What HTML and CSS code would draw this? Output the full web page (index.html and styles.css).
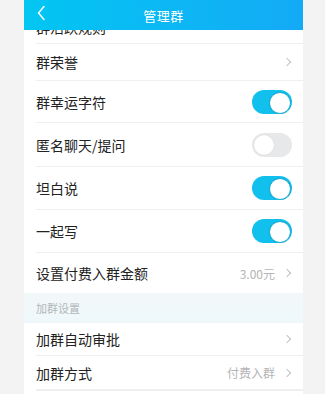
FILE: index.html
```html
<!DOCTYPE html>
<html lang="zh-CN">
<head>
<meta charset="utf-8">
<title>管理群</title>
<link rel="stylesheet" href="styles.css">
</head>
<body>
<div class="page">
  <header class="topbar">
    <svg class="back" width="10" height="16" viewBox="0 0 10 16"><path d="M8 1.5 L2.5 8 L8 14.5" fill="none" stroke="#ffffff" stroke-width="1.4" stroke-linecap="round" stroke-linejoin="round"/></svg>
    <span class="title">管理群</span>
  </header>
  <div class="list">
    <div class="row row-cut"><span class="label">群活跃规则</span></div>
    <div class="row h37"><span class="label">群荣誉</span><span class="right"><span class="chev"></span></span></div>
    <div class="row h42"><span class="label">群幸运字符</span><span class="switch on"></span></div>
    <div class="row h44"><span class="label">匿名聊天/提问</span><span class="switch"></span></div>
    <div class="row h43"><span class="label">坦白说</span><span class="switch on"></span></div>
    <div class="row h43"><span class="label">一起写</span><span class="switch on"></span></div>
    <div class="row h40 last"><span class="label">设置付费入群金额</span><span class="right"><span class="value">3.00元</span><span class="chev"></span></span></div>
    <div class="section">加群设置</div>
    <div class="group2">
      <div class="row h33"><span class="label">加群自动审批</span><span class="right"><span class="chev"></span></span></div>
      <div class="row h34"><span class="label">加群方式</span><span class="right"><span class="value">付费入群</span><span class="chev"></span></span></div>
      <div class="row h33 last"></div>
    </div>
  </div>
</div>
</body>
</html>
```

FILE: styles.css
```css
* { box-sizing: border-box; }
html, body {
  margin: 0;
  padding: 0;
  background: #f3f3f3;
  font-family: "Noto Sans CJK SC", "Noto Sans", sans-serif;
}
body { height: 394px; overflow: hidden; }
.page {
  position: relative;
  margin-left: 24px;
  width: 279px;
  height: 394px;
  background: #ffffff;
}
.topbar {
  position: absolute;
  top: 0;
  left: 0;
  right: 0;
  height: 30px;
  background: linear-gradient(90deg, #02c6f2 0%, #0cb8f4 50%, #14aaf6 100%);
  display: flex;
  align-items: center;
  justify-content: center;
  z-index: 2;
}
.back {
  position: absolute;
  left: 12px;
  top: 5px;
}
.title {
  color: #ffffff;
  font-size: 13px;
  letter-spacing: 0.5px;
}
.list { display: flex; flex-direction: column; }
.row {
  margin-left: 12px;
  padding-right: 11px;
  display: flex;
  align-items: center;
  justify-content: space-between;
  border-bottom: 1px solid #efefef;
  background: #ffffff;
}
.row.last { border-bottom: none; }
.row-cut {
  height: 44px;
  align-items: flex-start;
  padding-top: 17px;
}
.h33 { height: 33px; }
.h34 { height: 34px; }
.h37 { height: 37px; }
.h40 { height: 40px; }
.h42 { height: 42px; }
.h43 { height: 43px; }
.h44 { height: 44px; }
.row.h33.last { border-top: 1px solid #efefef; }
.label {
  font-size: 14px;
  color: #222222;
}
.right { display: flex; align-items: center; gap: 9px; }
.value { font-size: 12px; color: #b4b4b4; }
.chev {
  width: 6px;
  height: 6px;
  border-top: 1.2px solid #c2c2c2;
  border-right: 1.2px solid #c2c2c2;
  transform: rotate(45deg);
  margin-right: 2px;
}
.switch {
  position: relative;
  width: 40px;
  height: 24px;
  border-radius: 12px;
  background: #e7e8ea;
}
.switch::after {
  content: "";
  position: absolute;
  top: 2px;
  left: 2px;
  width: 20px;
  height: 20px;
  border-radius: 50%;
  background: #ffffff;
  box-shadow: 0 0 1px rgba(0,0,0,0.15);
}
.switch.on { background: #12c0ee; }
.switch.on::after {
  left: 17px;
  border: 1px solid #14aed8;
}
.section {
  height: 30px;
  padding-left: 12px;
  display: flex;
  align-items: center;
  font-size: 11px;
  color: #b2b6b8;
  background: linear-gradient(180deg, #f2f8fa 0%, #eef8fa 100%);
}
.group2 { background: #ffffff; }
```
